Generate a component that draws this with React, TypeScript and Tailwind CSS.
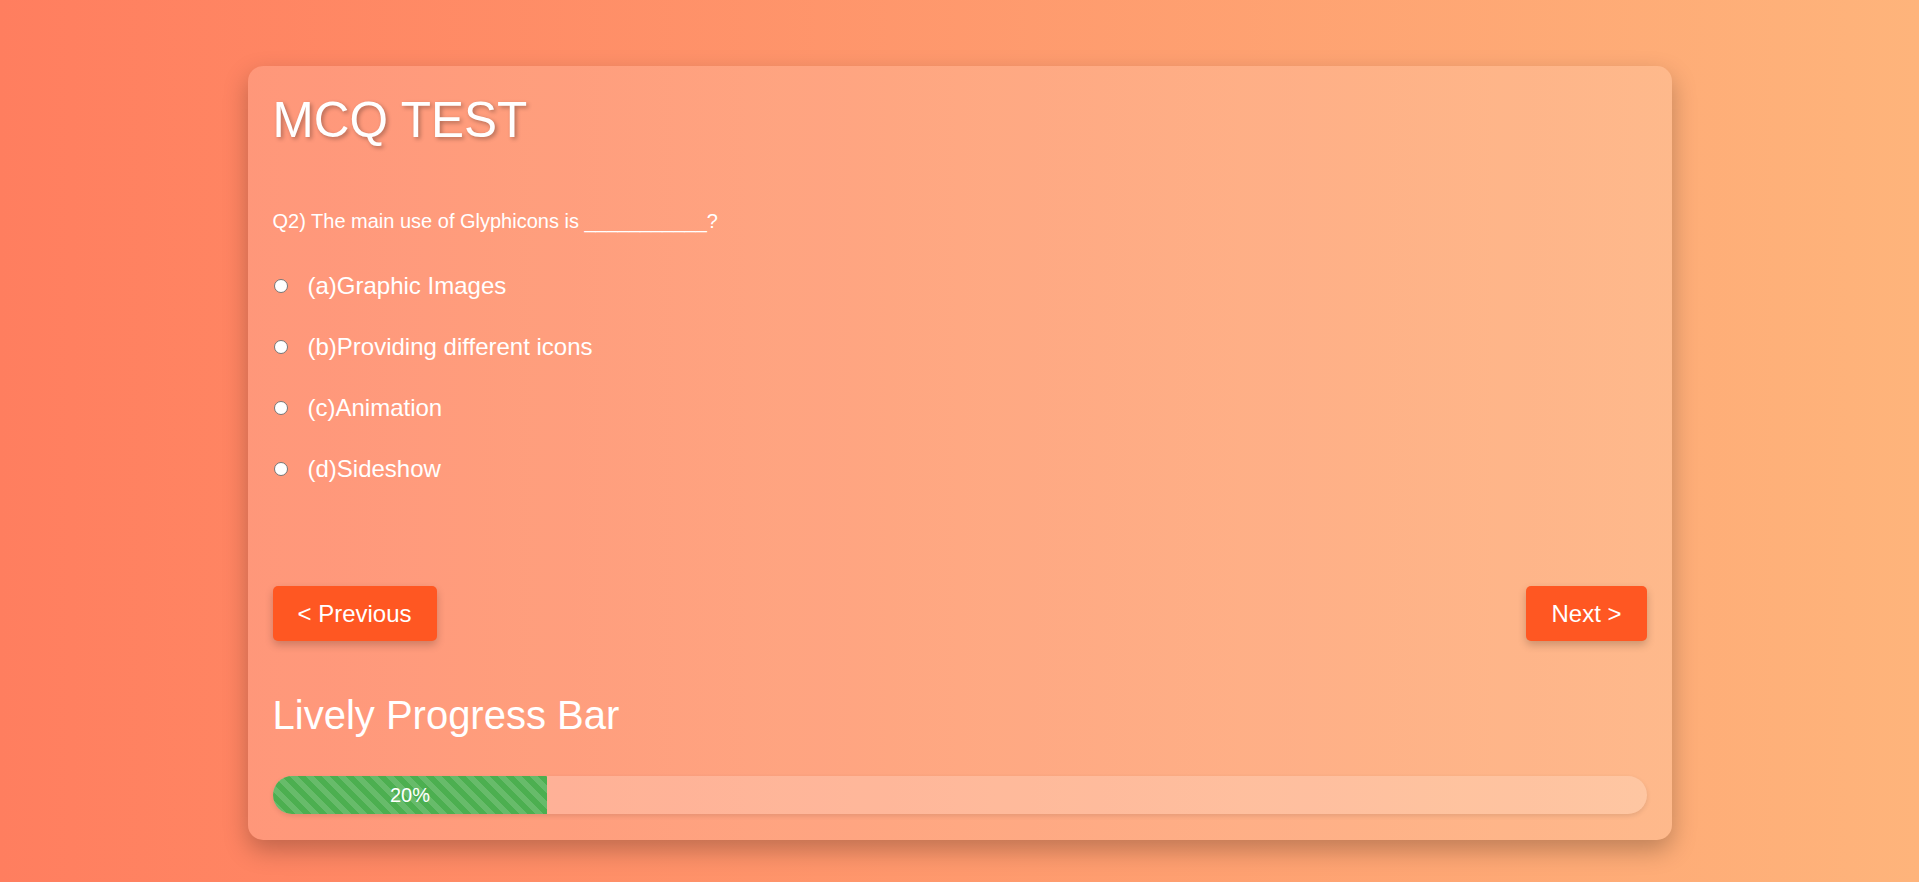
import { useState } from 'react'

const options = [
  '(a)Graphic Images',
  '(b)Providing different icons',
  '(c)Animation',
  '(d)Sideshow',
]

export default function App() {
  const [answer, setAnswer] = useState<string | null>(null)
  const progress = 20

  return (
    <div className="min-h-screen bg-[linear-gradient(to_right,#ff7e5f,#feb47b)] pt-[66px] pb-[45px] font-['Liberation_Sans',Arial,sans-serif] text-white">
      <div className="mx-auto w-[1424px] rounded-[15px] bg-white/15 px-[25px] pt-[25px] pb-[26px] shadow-[0_10px_25px_rgba(0,0,0,0.25)]">
        <h1 className="text-[49.5px] leading-[57px] font-normal [text-shadow:2px_2px_4px_rgba(0,0,0,0.3)]">MCQ TEST</h1>

        <p className="mt-[62px] text-[20px] leading-[23px]">Q2) The main use of Glyphicons is ___________?</p>

        <div className="mt-[22px] flex flex-col">
          {options.map(o => (
            <label key={o} className="flex h-[61px] items-center text-[24px] leading-[28px]">
              <input
                type="radio"
                name="q2"
                checked={answer === o}
                onChange={() => setAnswer(o)}
                className="m-0 ml-[1px] mr-[20px] h-[14px] w-[14px] appearance-none rounded-full border border-[#767676] bg-white checked:border-[4px] checked:border-[#0075ff]"
              />
              {o}
            </label>
          ))}
        </div>

        <div className="mt-[87px] flex justify-between">
          <button className="flex h-[55px] items-center rounded-[5px] bg-[#ff5722] px-[25px] text-[24px] leading-[28px] text-white shadow-[0_4px_8px_rgba(0,0,0,0.2)]">
            &lt; Previous
          </button>
          <button className="flex h-[55px] items-center rounded-[5px] bg-[#ff5722] px-[25px] text-[24px] leading-[28px] text-white shadow-[0_4px_8px_rgba(0,0,0,0.2)]">
            Next &gt;
          </button>
        </div>

        <h2 className="mt-[51px] text-[40px] leading-[46px] font-normal">Lively Progress Bar</h2>

        <div className="mt-[38px] h-[38px] overflow-hidden rounded-full bg-white/20 shadow-[0_2px_5px_rgba(0,0,0,0.1)]">
          <div
            className="flex h-full items-center justify-center bg-[#4caf50] bg-[linear-gradient(45deg,rgba(255,255,255,.15)_25%,transparent_25%,transparent_50%,rgba(255,255,255,.15)_50%,rgba(255,255,255,.15)_75%,transparent_75%,transparent)] bg-[length:1rem_1rem] text-[20px] leading-[23px]"
            style={{ width: `${progress}%` }}
          >
            {progress}%
          </div>
        </div>
      </div>
    </div>
  )
}
